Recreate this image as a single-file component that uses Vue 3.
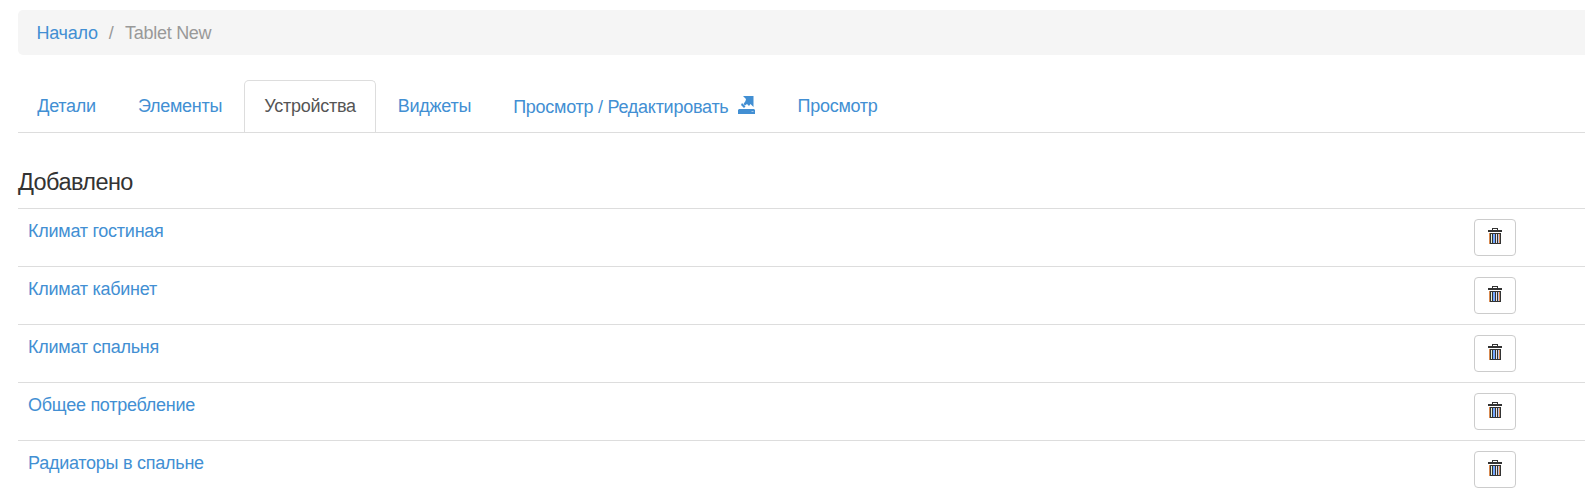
<script setup>
const tabs = [
  { label: 'Детали' },
  { label: 'Элементы' },
  { label: 'Устройства', active: true },
  { label: 'Виджеты' },
  { label: 'Просмотр / Редактировать', icon: true },
  { label: 'Просмотр' },
]
const devices = [
  'Климат гостиная',
  'Климат кабинет',
  'Климат спальня',
  'Общее потребление',
  'Радиаторы в спальне',
]
</script>

<template>
  <div class="page">
    <nav class="breadcrumb">
      <a>Начало</a><span class="sep">/</span><span class="current">Tablet New</span>
    </nav>

    <div class="tabs">
      <a v-for="tab in tabs" :key="tab.label" class="tab" :class="{ active: tab.active, wide: tab.icon }">
        <span>{{ tab.label }}</span>
        <svg v-if="tab.icon" class="open" width="17" height="18" viewBox="0 0 17 18">
          <path d="M5 0H15.500V11L12.500 8L11 10L9 8L7 9.500L5.500 8L7.500 5L8 3Z M4 7L7.500 10.500L6 12L3 9Z" />
          <path d="M1 13H16L17 14V18H0V14Z" />
          <path class="led" d="M13.500 15H15.500V16H13.500Z" />
        </svg>
      </a>
    </div>

    <h4>Добавлено</h4>
    <div class="list">
      <div v-for="device in devices" :key="device" class="row">
        <a>{{ device }}</a>
        <button type="button" aria-label="Удалить">
          <svg width="14" height="16" viewBox="0 0 14 16" shape-rendering="crispEdges">
            <path fill="#333" d="M4 0H10V2H14V4H0V2H4ZM5 1V2H9V1Z" fill-rule="evenodd" />
            <path fill="#333" d="M1 5H13V16H1Z" />
            <path fill="#d98a50" d="M1 5H2V16H1Z M11 6H12V15H11Z" />
            <path fill="#e4f4dc" d="M3 6H4V15H3Z" />
            <path fill="#75a9ff" d="M5 6H7V15H5Z" />
            <path fill="#e8e4e6" d="M8 6H9V15H8Z" />
            <path fill="#b9c8ee" d="M10 6H11V15H10Z" />
          </svg>
        </button>
      </div>
    </div>
  </div>
</template>

<style>
body {
  background: #fff;
  overflow: hidden;
}
</style>

<style scoped>
.page {
  box-sizing: border-box;
  height: 498px;
  padding: 10px 0 0 18px;
  overflow: hidden;
  color: #333;
  font: 18px/25px "Liberation Sans", Arial, sans-serif;
  letter-spacing: -0.26px;
}
a {
  color: #428fd3;
  text-decoration: none;
}
.breadcrumb {
  display: flex;
  box-sizing: border-box;
  height: 45px;
  padding: 11px 18.5px 9px;
  border-radius: 5px 0 0 5px;
  background: #f5f5f5;
  color: #999;
}
.sep {
  margin: 0 11.5px 0 11px;
}
.tabs {
  display: flex;
  box-sizing: border-box;
  height: 53px;
  margin-top: 25px;
  border-bottom: 1px solid #ddd;
}
.tab {
  display: flex;
  box-sizing: border-box;
  height: 52px;
  margin-right: 2.5px;
  padding: 13px 18.75px 0;
  border: 1px solid transparent;
  white-space: nowrap;
}
.tab:first-child {
  margin-left: -0.5px;
}
.tab.active {
  border-color: #ddd;
  border-bottom: 0;
  border-radius: 5px 5px 0 0;
  background: #fff;
  color: #555;
}
.tab.wide {
  padding-top: 14px;
}
.open {
  margin: 1px 0 0 10px;
  fill: #428fd3;
}
.open .led {
  fill: #9cc4e8;
}
h4 {
  margin: 37px 0 13px;
  font-size: 23.5px;
  font-weight: 400;
  letter-spacing: -0.58px;
  line-height: 25px;
}
.row {
  display: flex;
  box-sizing: border-box;
  align-items: flex-start;
  justify-content: space-between;
  height: 58px;
  padding: 10px 69px 0 10px;
  border-top: 1px solid #ddd;
}
button {
  display: flex;
  box-sizing: border-box;
  width: 42px;
  height: 37px;
  padding: 8px 0 0 13px;
  border: 1px solid #ccc;
  border-radius: 4px;
  background: #fff;
}
</style>
